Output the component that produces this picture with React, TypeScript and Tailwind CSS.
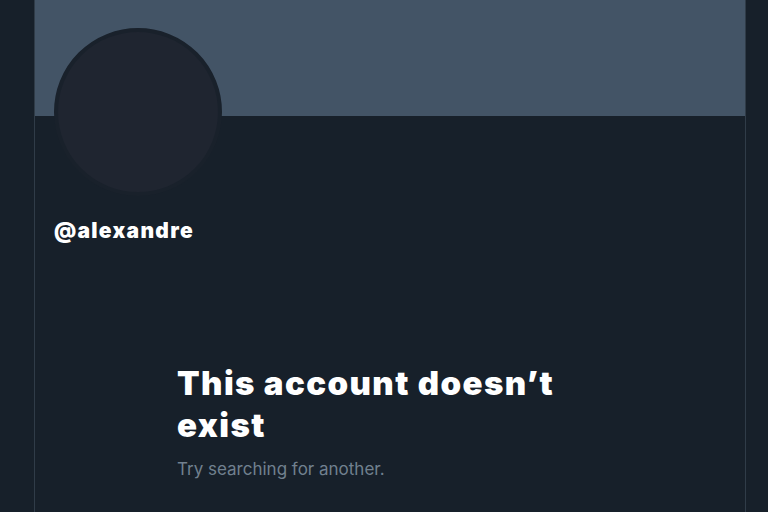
export default function App() {
  return (
    <div
      className="flex w-[768px] h-[512px] overflow-hidden bg-[#17202a]"
      style={{ fontFamily: "Inter, 'Noto Sans', sans-serif" }}
    >
      {/* left gutter */}
      <div className="w-[34px] shrink-0" />

      {/* main column */}
      <div className="w-[712px] shrink-0 border-x border-[#303c48] flex flex-col">
        {/* banner */}
        <div className="h-[116px] bg-[#435466] shrink-0" />

        <div className="px-[19px]">
          {/* avatar */}
          <div className="-mt-[88px] w-[168px] h-[168px] rounded-full bg-[#1f2530] border-4 border-[#19212b]" />

          <div className="mt-[23px] text-white font-black text-[21px] leading-6 tracking-[1.3px]">
            @alexandre
          </div>
        </div>

        <div className="pl-[142px] mt-[119px]">
          <h1 className="text-white font-black text-[33px] leading-[42px] tracking-[1.4px] w-[420px]">
            This account doesn’t exist
          </h1>
          <p className="mt-[13px] text-[#71808f] text-[17px] leading-5">
            Try searching for another.
          </p>
        </div>
      </div>

      <div className="flex-1" />
    </div>
  );
}
